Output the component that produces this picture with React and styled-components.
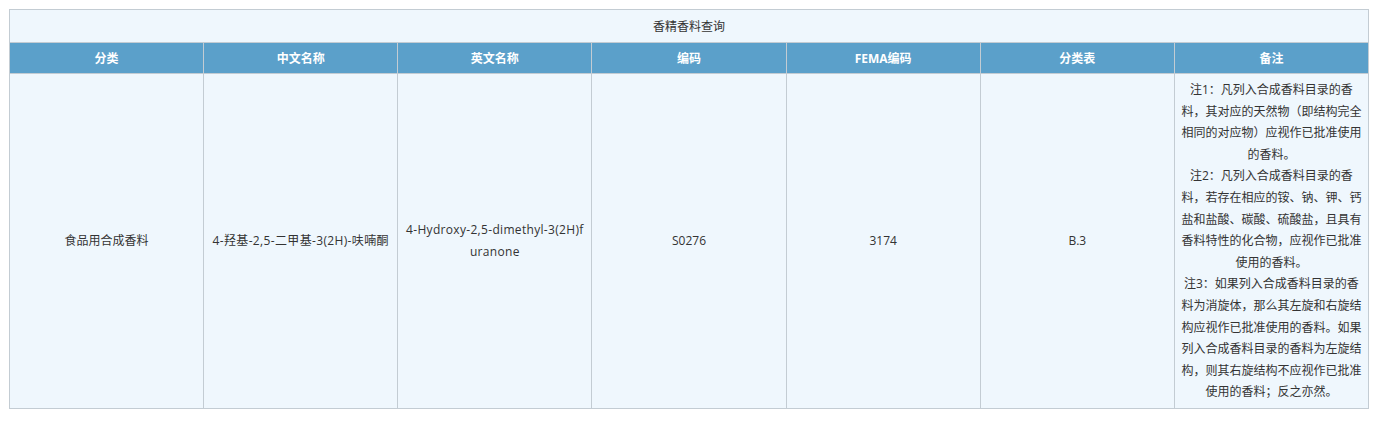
import React from "react";
import styled, { createGlobalStyle } from "styled-components";

const Global = createGlobalStyle`
  html, body { margin: 0; padding: 0; background: #ffffff; }
  body { font-family: "Open Sans", "Noto Sans CJK SC", sans-serif; }
`;

const Wrap = styled.div`
  padding: 9px 8px 0 9px;
`;

const Table = styled.table`
  width: 1360px;
  border-collapse: collapse;
  table-layout: fixed;
  font-size: 12px;
  color: #333333;
  background: #eff7fd;
`;

const Caption = styled.th`
  height: 32px;
  padding: 0;
  border: 1px solid #c3ccd3;
  font-weight: normal;
  text-align: center;
  color: #333333;
  background: #eff7fd;
`;

const Head = styled.th`
  height: 30px;
  padding: 0 5px;
  border: 1px solid #c3ccd3;
  background: #5ba0ca;
  color: #ffffff;
  font-weight: bold;
  text-align: center;
`;

const Cell = styled.td`
  padding: 5px 5px;
  border: 1px solid #c3ccd3;
  text-align: center;
  vertical-align: middle;
  line-height: 21.6px;
  word-break: break-all;
  letter-spacing: ${(p) => p.$track || 0}px;
  color: #333333;
`;

const headers = ["分类", "中文名称", "英文名称", "编码", "FEMA编码", "分类表", "备注"];

const remarks = [
  "注1：凡列入合成香料目录的香料，其对应的天然物（即结构完全相同的对应物）应视作已批准使用的香料。",
  "注2：凡列入合成香料目录的香料，若存在相应的铵、钠、钾、钙盐和盐酸、碳酸、硫酸盐，且具有香料特性的化合物，应视作已批准使用的香料。",
  "注3：如果列入合成香料目录的香料为消旋体，那么其左旋和右旋结构应视作已批准使用的香料。如果列入合成香料目录的香料为左旋结构，则其右旋结构不应视作已批准使用的香料；反之亦然。",
];

const row = [
  { text: "食品用合成香料" },
  { text: "4-羟基-2,5-二甲基-3(2H)-呋喃酮", track: 0.35 },
  { text: "4-Hydroxy-2,5-dimethyl-3(2H)furanone", track: 0.32 },
  { text: "S0276" },
  { text: "3174" },
  { text: "B.3" },
];

export default function App() {
  return (
    <Wrap>
      <Global />
      <Table>
        <thead>
          <tr>
            <Caption colSpan={7}>香精香料查询</Caption>
          </tr>
          <tr>
            {headers.map((h) => (
              <Head key={h}>{h}</Head>
            ))}
          </tr>
        </thead>
        <tbody>
          <tr>
            {row.map((c) => (
              <Cell key={c.text} $track={c.track}>
                {c.text}
              </Cell>
            ))}
            <Cell>
              {remarks.map((r, i) => (
                <React.Fragment key={i}>
                  {r}
                  {i < remarks.length - 1 && <br />}
                </React.Fragment>
              ))}
            </Cell>
          </tr>
        </tbody>
      </Table>
    </Wrap>
  );
}
